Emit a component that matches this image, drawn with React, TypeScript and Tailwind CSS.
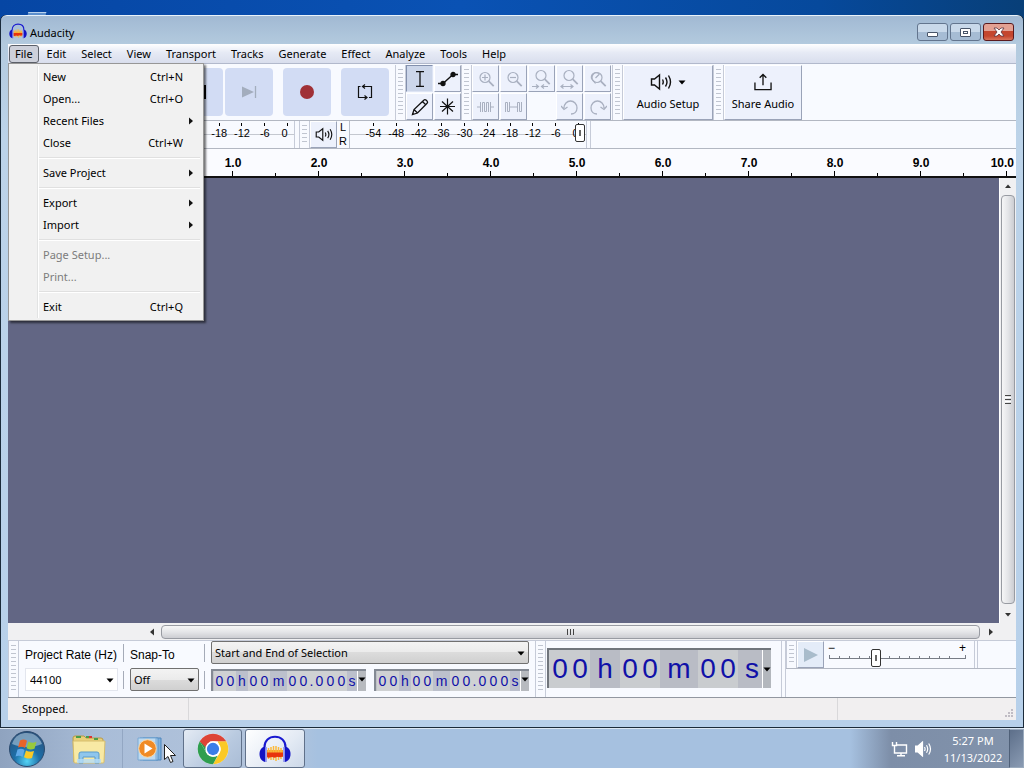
import React from "react";
import type { ReactNode } from "react";

const UI_FONT = "font-['Noto_Sans','Open_Sans',sans-serif]";
const ARIAL = "font-['Liberation_Sans',Arial,sans-serif]";

type MenuEntry = { label: string; shortcut?: string; submenu?: boolean; disabled?: boolean };

const fileMenu: MenuEntry[][] = [
  [
    { label: "New", shortcut: "Ctrl+N" },
    { label: "Open...", shortcut: "Ctrl+O" },
    { label: "Recent Files", submenu: true },
    { label: "Close", shortcut: "Ctrl+W" },
  ],
  [{ label: "Save Project", submenu: true }],
  [
    { label: "Export", submenu: true },
    { label: "Import", submenu: true },
  ],
  [
    { label: "Page Setup...", disabled: true },
    { label: "Print...", disabled: true },
  ],
  [{ label: "Exit", shortcut: "Ctrl+Q" }],
];

const menus = ["Edit", "Select", "View", "Transport", "Tracks", "Generate", "Effect", "Analyze", "Tools", "Help"];

function AudacityLogo({ className }: { className: string }) {
  return (
    <svg viewBox="0 0 32 28" className={className} aria-hidden="true">
      <path d="M5.500 14V12C5.500 5.500 10 1.800 16 1.800S26.500 5.500 26.500 12v2" fill="none" stroke="#1a1ad0" strokeWidth="2" />
      <path d="M8 15h16v7H8z" fill="#f9a02a" />
      <path d="M9.500 13v11M12 12v13M14.500 11v14M17 11v15M19.500 12v13M22 13v11" stroke="#fbb93a" strokeWidth="1.500" />
      <path d="M8 17.500h16v4l-3 .8-3-.6-2 1-3-.8-3 .8-2-.4z" fill="#e8340c" />
      <path d="M6.500 11.500C2.500 12 0.500 15 0.500 19s2 7.500 6 8z" fill="#1313c4" />
      <path d="M25.500 11.500c4 .5 6 3.500 6 7.500s-2 7.500-6 8z" fill="#1313c4" />
      <path d="M7 12v15M25 12v15" stroke="#8d93ee" strokeWidth="1.600" />
    </svg>
  );
}

function SpeakerIcon({ className }: { className: string }) {
  return (
    <svg viewBox="0 0 22 18" className={className} fill="none" stroke="#111" strokeWidth="1.400" aria-hidden="true">
      <path d="M1.500 6v6h3l5 4V2l-5 4z" />
      <path d="M12.500 6.500q1.500 2.500 0 5M15.500 4.500q3 4.500 0 9M18.500 2.500q4 6.500 0 13" />
    </svg>
  );
}

function Caret({ className = "" }: { className?: string }) {
  return (
    <svg viewBox="0 0 8 5" className={`h-[5px] w-2 ${className}`} aria-hidden="true">
      <path d="M0.500 0.500h7L4 4.500z" fill="#000" />
    </svg>
  );
}

function Grabber({ className = "" }: { className?: string }) {
  return (
    <div
      className={`w-[11px] shrink-0 self-stretch border-x border-[#c6cbd8] bg-[#f8faff] px-0.5 py-1 ${className}`}
    >
      <div className="h-full bg-[repeating-linear-gradient(#c0c5d0_0_1px,#f8faff_1px_4px)]" />
    </div>
  );
}

function TransportButton({ label, className = "", children }: { label: string; className?: string; children: ReactNode }) {
  return (
    <button
      type="button"
      aria-label={label}
      className={`flex size-12 shrink-0 items-center justify-center rounded bg-[#d2dcf4] ${className}`}
    >
      {children}
    </button>
  );
}

function ToolButton({ label, active, children }: { label: string; active?: boolean; children: ReactNode }) {
  return (
    <button
      type="button"
      aria-label={label}
      className={`flex size-[27px] items-center justify-center border ${
        active
          ? "border-[#8390ad] border-r-[#dde4f4] border-b-[#dde4f4] bg-[#ccd6ea]"
          : "border-white border-r-[#9aa3b8] border-b-[#9aa3b8] bg-[#edf1fc]"
      }`}
    >
      {children}
    </button>
  );
}

const zoomGlyphs: { label: string; detail: ReactNode }[] = [
  { label: "Zoom In", detail: <path d="M7 9.500h6M10 6.500v6" /> },
  { label: "Zoom Out", detail: <path d="M7 9.500h6" /> },
  { label: "Fit Selection", detail: <path d="M1 18.500h6M5 16.500l2.500 2L5 20.500M17 18.500h-6M13 16.500l-2.500 2 2.500 2" /> },
  { label: "Fit Project", detail: <path d="M2 18.500h12M4.500 16.500l-2.500 2 2.500 2M11.500 16.500l2.500 2-2.500 2" /> },
  { label: "Zoom Toggle", detail: <path d="M12 5.500C8 3 3.500 6 4.500 10.500l4 5M8.500 10l4-4" /> },
];

function ZoomIcon({ detail, raised }: { detail: ReactNode; raised: boolean }) {
  return (
    <svg viewBox="0 0 22 22" className="size-[22px]" fill="none" stroke="#a9b0c0" strokeWidth="1.200" aria-hidden="true">
      <g transform={raised ? "translate(1 -1)" : "translate(1 1)"}>
        <circle cx="9" cy="8.500" r="5" />
        <path d="M12.700 12.200l5 5" strokeWidth="1.800" />
      </g>
      {detail}
    </svg>
  );
}

const levels = ["-54", "-48", "-42", "-36", "-30", "-24", "-18", "-12", "-6", "0"];

function Meter({ name, width, from = 0, children }: { name: string; width: string; from?: number; children: ReactNode }) {
  return (
    <div className={`flex shrink-0 items-stretch overflow-hidden border-r border-[#c6cbd8] ${width}`}>
      <Grabber />
      <button
        type="button"
        aria-label={name}
        className="flex w-[27px] shrink-0 items-center justify-center border border-white border-r-[#9aa3b8] border-b-[#9aa3b8] bg-[#edf1fc]"
      >
        {children}
      </button>
      <div className={`flex w-3 shrink-0 flex-col items-center justify-between text-[11px] leading-[13px] ${ARIAL}`}>
        {from === 0 && (
          <>
            <span>L</span>
            <span>R</span>
          </>
        )}
      </div>
      <div className="flex w-[241px] shrink-0 border-l border-[#b9bfcb] bg-[linear-gradient(#c4c8d0,#c4c8d0)] bg-[length:100%_1px] bg-center bg-no-repeat pl-3">
        {levels.map((l, i) => (
          <div key={l} className={`flex flex-1 flex-col items-center text-[11px] leading-[15px] ${ARIAL}`}>
            <div className="mt-0.5 h-[3px] w-px bg-black" />
            {i >= from && <span className={l === "0" ? "pr-1.5" : ""}>{l}</span>}
          </div>
        ))}
      </div>
    </div>
  );
}

const timeParts = ["00", "h", "00", "m", "00", ".", "000", "s"];

function TimeField({ label }: { label: string }) {
  const widths: Record<string, string> = { h: "w-3", m: "w-[17px]", ".": "w-[5px]", s: "w-2.5" };
  return (
    <div
      role="group"
      aria-label={label}
      className={`flex h-[22px] items-stretch border-t-2 border-l-2 border-[#848a94] bg-[#bfc1c6] pl-px text-sm leading-5 text-[#1010a8] ${ARIAL}`}
    >
      {timeParts.map((p, i) =>
        /\d/.test(p) ? (
          <span key={i} className="flex bg-[#cfd1d3]">
            {p.split("").map((d, j) => (
              <span key={j} className="w-[11px] text-center">
                {d}
              </span>
            ))}
          </span>
        ) : (
          <span key={i} className={`flex justify-center ${p === "." ? "bg-[#cfd1d3]" : "bg-[#bcc0cc]"} ${widths[p]}`}>
            {p}
          </span>
        )
      )}
      <button type="button" aria-label={`${label} format`} className="flex w-[9px] justify-center border-l border-white bg-[#b7babf] pt-1.5">
        <Caret />
      </button>
    </div>
  );
}

function BigTime() {
  const widths: Record<string, string> = { h: "w-[30px]", m: "w-[38px]", s: "w-[24px] pl-1" };
  return (
    <div
      role="group"
      aria-label="Audio position"
      className={`flex h-10 items-stretch border-t-2 border-l-2 border-[#70757c] bg-[#c9cccf] pl-px text-[28px] leading-[38px] text-[#1010a8] ${ARIAL}`}
    >
      {["00", "h", "00", "m", "00", "s"].map((p, i) =>
        p === "00" ? (
          <span key={i} className="flex">
            <span className="w-5 text-center">0</span>
            <span className="w-5 text-center">0</span>
          </span>
        ) : (
          <span key={i} className={`flex justify-center bg-[#b9bcc5] ${widths[p]}`}>
            {p}
          </span>
        )
      )}
      <button type="button" aria-label="Audio position format" className="flex w-[9px] items-center justify-center border-l border-white bg-[#b3b7bd]">
        <Caret />
      </button>
    </div>
  );
}

function Dropdown({ id, options, className }: { id: string; options: string[]; className: string }) {
  return (
    <div className="relative">
      <select
        id={id}
        aria-label={id}
        className={`block h-[23px] w-full appearance-none pr-4 text-[11px] leading-4 text-black ${className}`}
      >
        {options.map((o) => (
          <option key={o}>{o}</option>
        ))}
      </select>
      <Caret className="pointer-events-none absolute top-[10px] right-1" />
    </div>
  );
}

function TitleBar() {
  const base = "flex h-[18px] w-[31px] items-center justify-center rounded-[3px] border";
  const grey = "border-[#63758e] bg-[linear-gradient(#c9d9ea_0_50%,#a6bcd4_50%_100%)]";
  return (
    <header className="-mx-[7px] -mt-px flex h-[29px] shrink-0 items-start pr-[9px] pl-2 text-xs">
      <AudacityLogo className="mt-2 h-4 w-[18px]" />
      <h1 className="mt-[10px] ml-[3px] flex-1 text-[11px] leading-4">Audacity</h1>
      <div className="mt-2 flex gap-0.5">
        <button type="button" aria-label="Minimize" className={`${base} ${grey}`}>
          <span className="mt-1 h-[5px] w-[11px] rounded-[1px] border border-[#485569] bg-white" />
        </button>
        <button type="button" aria-label="Maximize" className={`${base} ${grey}`}>
          <span className="flex h-[9px] w-[11px] items-center justify-center rounded-[1px] border border-[#485569] bg-white">
            <span className="h-[3px] w-[5px] border border-[#485569]" />
          </span>
        </button>
        <button
          type="button"
          aria-label="Close window"
          className={`${base} border-[#5b1a1d] bg-[linear-gradient(#e3a193_0_45%,#c4462e_45%_75%,#d9735a)]`}
        >
          <svg viewBox="0 0 12 10" className="h-[10px] w-3" aria-hidden="true">
            <path d="M1 1h3l2 2 2-2h3L8 5l3 4H8L6 7 4 9H1l3-4z" fill="#fff" stroke="#5a3540" strokeWidth="0.800" />
          </svg>
        </button>
      </div>
    </header>
  );
}

function FileMenu() {
  return (
    <div
      role="menu"
      className="absolute top-full left-0 z-20 w-[196px] border border-[#979797] bg-[#f1f1f1] py-0.5 text-[11px] shadow-[2px_2px_2px_rgba(0,0,0,0.55)]"
    >
      <div className="bg-[linear-gradient(90deg,transparent_28px,#e2e3e3_28px_29px,#fff_29px_30px,transparent_30px)]">
        {fileMenu.map((group, i) => (
          <div key={i}>
            {i > 0 && (
              <div className="flex h-2 items-center pr-[3px] pl-[30px]">
                <div className="h-0.5 w-full border-t border-[#e0e0e0] bg-white" />
              </div>
            )}
            {group.map((m) => (
              <button
                key={m.label}
                type="button"
                role="menuitem"
                disabled={m.disabled}
                className={`flex h-[22px] w-full items-center pr-[10px] pl-[34px] ${m.disabled ? "text-[#7c7c7c]" : "text-black"}`}
              >
                <span className="flex-1 text-left">{m.label}</span>
                {m.shortcut && <span className="pr-[10px]">{m.shortcut}</span>}
                {m.submenu && (
                  <svg viewBox="0 0 4 8" className="h-2 w-1" aria-hidden="true">
                    <path d="M0 0.500v7L4 4z" fill="#111" />
                  </svg>
                )}
              </button>
            ))}
          </div>
        ))}
      </div>
    </div>
  );
}

function MenuBar() {
  return (
    <nav className="flex h-5 shrink-0 border-b border-[#b2b9cc] bg-[linear-gradient(#fff,#e6eaf5_45%,#d9deed)] text-[11px] leading-4">
      <div className="relative pl-px">
        <button type="button" aria-expanded="true" className="mt-px h-[18px] rounded-[3px] border border-[#5c6069] bg-[#cdd0da] px-[5px]">
          File
        </button>
        <FileMenu />
      </div>
      {menus.map((m) => (
        <button key={m} type="button" className="pr-[7px] pl-2">
          {m}
        </button>
      ))}
    </nav>
  );
}

function Toolbars() {
  return (
    <div className="shrink-0 bg-[#f8faff]">
      <div className="flex h-[57px] items-stretch border-b border-[#b2b7c2] pt-px">
        <Grabber />
        <div className="flex items-center gap-0.5 pr-1.5 pb-0.5 pl-1.5">
          <TransportButton label="Pause">
            <svg viewBox="0 0 14 14" className="size-[14px]" aria-hidden="true">
              <path d="M2 1h3v12H2zM9 1h3v12H9z" />
            </svg>
          </TransportButton>
          <TransportButton label="Play">
            <svg viewBox="0 0 14 14" className="size-[14px]" aria-hidden="true">
              <path d="M1 0l12 7-12 7z" fill="#3a9a3a" />
            </svg>
          </TransportButton>
          <TransportButton label="Skip to Start">
            <svg viewBox="0 0 15 12" className="h-3 w-[15px]" aria-hidden="true">
              <path d="M14 0.500v11L3 6z" fill="#a3adbd" />
            </svg>
          </TransportButton>
          <TransportButton label="Stop">
            <span className="size-[14px] bg-black" />
          </TransportButton>
          <TransportButton label="Skip to End">
            <svg viewBox="0 0 15 12" className="h-3 w-[15px]" aria-hidden="true">
              <path d="M0 0.500v11L12 6z" fill="#a3adbd" />
              <path d="M13.500 0v12" stroke="#a3adbd" strokeWidth="1.300" />
            </svg>
          </TransportButton>
          <TransportButton label="Record" className="ml-2">
            <span className="size-[14px] rounded-full bg-[#a03036]" />
          </TransportButton>
          <TransportButton label="Loop" className="ml-2">
            <svg viewBox="0 0 18 18" className="size-[18px]" fill="none" stroke="#111" strokeWidth="1.200" aria-hidden="true">
              <path d="M4.500 3.500H2.500v11h8M8.500 12.500l2.500 2-2.500 2M13 14.500h2.500v-11H7M9 1.500l-2.500 2 2.500 2" />
            </svg>
          </TransportButton>
        </div>
        <Grabber />
        <div className="grid shrink-0 grid-cols-2 content-start gap-px">
          <ToolButton label="Selection Tool" active>
            <svg viewBox="0 0 12 18" className="h-[18px] w-3" fill="none" stroke="#111" strokeWidth="1.300" aria-hidden="true">
              <path d="M2 1.700h8M2 16.300h8M6 1.700v14.600" />
            </svg>
          </ToolButton>
          <ToolButton label="Envelope Tool">
            <svg viewBox="0 0 20 16" className="h-4 w-5" stroke="#111" strokeWidth="1.300" aria-hidden="true">
              <path d="M0 12.500h5l10-9h5" fill="none" />
              <circle cx="5" cy="12.500" r="2" fill="#111" />
              <circle cx="15" cy="3.500" r="2" fill="#111" />
            </svg>
          </ToolButton>
          <ToolButton label="Draw Tool">
            <svg viewBox="0 0 18 18" className="size-[18px]" fill="none" stroke="#111" strokeWidth="1.300" aria-hidden="true">
              <path d="M1.500 16.500l1.500-5L13 2q1-1 2.300.3l.8.8q1 1.200 0 2.200L6.500 15zM11.500 3.500l3.200 3.200M3 11.500L6.500 15" />
            </svg>
          </ToolButton>
          <ToolButton label="Multi-Tool">
            <svg viewBox="0 0 17 17" className="size-[17px]" stroke="#111" strokeWidth="1.200" aria-hidden="true">
              <path d="M8.500 0.500v16M1 8.500h15M3 3.500l11 10M14 3.500l-11 10" />
            </svg>
          </ToolButton>
        </div>
        <Grabber />
        <div className="grid shrink-0 grid-cols-5 content-start gap-px">
          {zoomGlyphs.map((z, i) => (
            <ToolButton key={z.label} label={z.label}>
              <ZoomIcon detail={z.detail} raised={i === 2 || i === 3} />
            </ToolButton>
          ))}
          <ToolButton label="Trim">
            <svg viewBox="0 0 17 12" className="h-3 w-[17px]" fill="none" stroke="#a9b0c0" aria-hidden="true">
              <path d="M0 6h3.500M13.500 6H17M3.500 1v10M5.500 11V1.500h2v9h2v-9h2V11M13.500 1v10" strokeWidth="1" />
            </svg>
          </ToolButton>
          <ToolButton label="Silence">
            <svg viewBox="0 0 17 12" className="h-3 w-[17px]" fill="none" stroke="#a9b0c0" aria-hidden="true">
              <path d="M0.500 11V1.500h2v9h2V1M4.500 6h8M12.500 11V1.500h2v9h2V1" strokeWidth="1" />
            </svg>
          </ToolButton>
          <span />
          <ToolButton label="Undo">
            <svg viewBox="0 0 18 16" className="h-4 w-[18px]" fill="none" stroke="#a9b0c0" strokeWidth="1.300" aria-hidden="true">
              <path d="M10 15c3 0 6-2 6-6s-3-7-6.500-7S3 5 3 9M0 7l3 3.500L6.500 8" />
            </svg>
          </ToolButton>
          <ToolButton label="Redo">
            <svg viewBox="0 0 18 16" className="h-4 w-[18px]" fill="none" stroke="#a9b0c0" strokeWidth="1.300" aria-hidden="true">
              <path d="M8 15c-3 0-6-2-6-6s3-7 6.500-7S15 5 15 9M18 7l-3 3.500L11.500 8" />
            </svg>
          </ToolButton>
        </div>
        <Grabber className="ml-px" />
        <button
          type="button"
          className="flex w-[90px] shrink-0 flex-col items-center border border-white border-r-[#9aa3b8] border-b-[#9aa3b8] bg-[#edf1fc] pt-[7px] text-[11px]"
        >
          <span className="flex items-center gap-1.5">
            <SpeakerIcon className="h-[18px] w-[22px]" />
            <Caret />
          </span>
          <span className="mt-[5px] leading-4">Audio Setup</span>
        </button>
        <Grabber />
        <button
          type="button"
          className="flex w-[78px] shrink-0 flex-col items-center border border-white border-r-[#9aa3b8] border-b-[#9aa3b8] bg-[#edf1fc] pt-[7px] text-[11px]"
        >
          <svg viewBox="0 0 20 19" className="h-[18px] w-5" fill="none" stroke="#111" strokeWidth="1.400" aria-hidden="true">
            <path d="M1.500 10v7.500h17V10M10 13V1.500M6.500 5L10 1.500 13.500 5" />
          </svg>
          <span className="mt-[5px] leading-4 whitespace-nowrap">Share Audio</span>
        </button>
      </div>
      <div className="flex h-7 items-stretch border-b border-[#b2b7c2]">
        <Meter name="Record Meter" width="mr-1 w-[287px]" from={6}>
          <svg viewBox="0 0 12 18" className="h-[18px] w-3" fill="none" stroke="#111" strokeWidth="1.300" aria-hidden="true">
            <path d="M4 1h4v9H4zM1 8c0 7 10 7 10 0M6 13v4" />
          </svg>
        </Meter>
        <div className="relative flex border-r border-[#c6cbd8] pr-[3px]">
          <Meter name="Playback Meter" width="w-[288px]">
            <SpeakerIcon className="h-[15px] w-[18px]" />
          </Meter>
          <input
            type="range"
            aria-label="Playback volume"
            defaultValue={100}
            className="absolute top-[3px] right-[5px] h-[18px] w-[230px] appearance-none bg-transparent [&::-webkit-slider-thumb]:h-[18px] [&::-webkit-slider-thumb]:w-[10px] [&::-webkit-slider-thumb]:appearance-none [&::-webkit-slider-thumb]:rounded-[2px] [&::-webkit-slider-thumb]:border [&::-webkit-slider-thumb]:border-[#333] [&::-webkit-slider-thumb]:bg-[linear-gradient(#666,#666)] [&::-webkit-slider-thumb]:bg-[length:2px_6px] [&::-webkit-slider-thumb]:bg-center [&::-webkit-slider-thumb]:bg-no-repeat [&::-webkit-slider-thumb]:bg-white"
          />
        </div>
      </div>
    </div>
  );
}

function Ruler() {
  return (
    <div className={`flex h-[29px] shrink-0 overflow-hidden border-b-2 border-[#111] bg-[#fafbff] pl-[182px] text-xs font-bold ${ARIAL}`}>
      {[1, 2, 3, 4, 5, 6, 7, 8, 9].map((n) => (
        <div key={n} className="flex w-[86px] shrink-0 flex-col items-end">
          <span className="flex h-[22px] w-full items-center justify-center pt-1.5">{n}.0</span>
          <div className="flex h-[5px] w-full items-end">
            <span className="ml-[42px] h-[5px] w-px bg-black" />
            <span className="ml-[42px] h-[3px] w-px bg-black" />
          </div>
        </div>
      ))}
      <div className="flex flex-1 flex-col">
        <span className="flex h-[22px] items-center justify-end pt-1.5 pr-0.5">10.0</span>
        <span className="ml-[42px] h-[5px] w-px bg-black" />
      </div>
    </div>
  );
}

function Arrow({ d, className }: { d: string; className: string }) {
  return (
    <svg viewBox="0 0 8 8" className={`size-2 ${className}`} aria-hidden="true">
      <path d={d} fill="#333" />
    </svg>
  );
}

function TrackArea() {
  return (
    <>
      <main className="flex min-h-0 flex-1">
        <div className="flex-1 bg-[#626684]" />
        <div className="flex w-[17px] flex-col items-center border-l border-white bg-[#f0f0f2]">
          <Arrow d="M1 6l3-3.500L7 6z" className="my-1" />
          <div className="mt-px flex w-[14px] flex-1 flex-col items-center justify-center gap-px rounded-sm border border-[#989ba2] bg-[linear-gradient(90deg,#f6f6f7,#e4e5e8_50%,#cccdd2)]">
            <i className="h-px w-1.5 bg-[#444]" />
            <i className="h-px w-1.5 bg-white" />
            <i className="h-px w-1.5 bg-[#444]" />
            <i className="h-px w-1.5 bg-white" />
            <i className="h-px w-1.5 bg-[#444]" />
          </div>
          <Arrow d="M1 2l3 3.500L7 2z" className="mt-[7px] mb-1" />
        </div>
      </main>
      <div className="flex h-[17px] shrink-0 items-center bg-[#f0f0f2] pr-[21px] pl-[140px]">
        <Arrow d="M6 0.500v7L2 4z" className="mr-[5px]" />
        <div className="flex h-[14px] flex-1 items-center justify-center gap-0.5 rounded-sm border border-[#989ba2] bg-[linear-gradient(#f6f6f7,#e4e5e8_50%,#cccdd2)]">
          <i className="h-1.5 w-px bg-[#444]" />
          <i className="h-1.5 w-px bg-[#444]" />
          <i className="h-1.5 w-px bg-[#444]" />
        </div>
        <Arrow d="M2 0.500v7L6 4z" className="ml-[7px]" />
      </div>
    </>
  );
}

function SelectionBar() {
  const raised =
    "rounded-[2px] border border-[#707070] bg-[linear-gradient(#f3f3f3,#ebebeb_50%,#dcdcdc_50%,#d0d0d0)] pl-[3px]";
  return (
    <div className="flex h-[58px] shrink-0 items-stretch border-y border-t-[#c6cbd8] border-b-[#9297a0] bg-[#f8faff]">
      <Grabber className="mr-1.5" />
      <div className="grid shrink-0 grid-cols-[93px_auto_69px_auto_auto] content-start items-center gap-x-[5px] gap-y-1">
        <label htmlFor="Project Rate" className={`flex h-[23px] items-center pt-1 text-xs whitespace-nowrap ${ARIAL}`}>
          Project Rate (Hz)
        </label>
        <span className="mr-px h-[18px] w-px bg-[#a5abb8]" />
        <label htmlFor="Snap-To" className={`flex h-[23px] items-center pt-1 text-xs ${ARIAL}`}>
          Snap-To
        </label>
        <span className="mr-px h-[18px] w-px bg-[#a5abb8]" />
        <Dropdown id="Selection Format" options={["Start and End of Selection"]} className={raised} />
        <Dropdown id="Project Rate" options={["44100"]} className="border border-[#e3e6ee] bg-white pl-1" />
        <span className="mr-px h-[18px] w-px bg-[#a5abb8]" />
        <Dropdown id="Snap-To" options={["Off"]} className={raised} />
        <span className="mr-px h-[18px] w-px bg-[#a5abb8]" />
        <div className="flex gap-2">
          <TimeField label="Selection start" />
          <TimeField label="Selection end" />
        </div>
      </div>
      <Grabber className="mr-px ml-[6px]" />
      <div className="flex shrink-0 items-start border-r border-[#c6cbd8] pt-[7px] pr-[10px]">
        <BigTime />
      </div>
      <div className="ml-[3px] min-w-0 flex-1 border-l border-[#c6cbd8]">
        <div className="flex h-7 items-stretch border-b border-[#b2b7c2]">
          <Grabber />
          <button
            type="button"
            aria-label="Play at speed"
            className="flex w-[27px] shrink-0 items-center justify-center border border-white border-r-[#9aa3b8] border-b-[#9aa3b8] bg-[#e4ecf8]"
          >
            <svg viewBox="0 0 14 14" className="size-[14px]" aria-hidden="true">
              <path d="M0 0l14 7-14 7z" fill="#a9bccb" />
            </svg>
          </button>
          <div className={`relative mr-1.5 ml-1 w-[140px] shrink-0 text-xs leading-[14px] ${ARIAL}`}>
            <div className="flex justify-between pr-0.5">
              <span>−</span>
              <span>+</span>
            </div>
            <svg viewBox="0 0 140 7" preserveAspectRatio="none" className="h-[7px] w-full" aria-hidden="true">
              <path
                d="M1.500 0v3M11.500 1v2M21.500 1v2M31.500 1v2M41.500 1v2M51.500 1v2M61.500 1v2M71.500 1v2M81.500 1v2M91.500 1v2M101.500 1v2M111.500 1v2M121.500 1v2M137.500 0v3M1 3.500h137"
                stroke="#777c86"
                fill="none"
              />
            </svg>
            <input
              type="range"
              aria-label="Playback speed"
              defaultValue={33}
              className="absolute inset-x-0 top-2 h-[18px] w-full appearance-none bg-transparent [&::-webkit-slider-thumb]:h-[18px] [&::-webkit-slider-thumb]:w-[10px] [&::-webkit-slider-thumb]:appearance-none [&::-webkit-slider-thumb]:rounded-[2px] [&::-webkit-slider-thumb]:border [&::-webkit-slider-thumb]:border-[#333] [&::-webkit-slider-thumb]:bg-[linear-gradient(#666,#666)] [&::-webkit-slider-thumb]:bg-[length:2px_6px] [&::-webkit-slider-thumb]:bg-center [&::-webkit-slider-thumb]:bg-no-repeat [&::-webkit-slider-thumb]:bg-white"
            />
          </div>
          <div className="w-1 border-x border-[#c6cbd8]" />
        </div>
      </div>
    </div>
  );
}

function Taskbar() {
  return (
    <footer className="flex h-10 shrink-0 items-stretch border-t border-[#dbe7f3] bg-[linear-gradient(90deg,#8fa3bf,#a9bdd8_10%,#b4c5dc_28%,#a6c1e0_31%,#a6c1e0_83%,#7d8ea8_87%,#8293ab)] pl-2">
      <button type="button" aria-label="Start" className="w-[38px]">
        <svg viewBox="0 0 38 38" className="size-[38px]">
          <defs>
            <radialGradient id="orb" cx="50%" cy="85%" r="80%">
              <stop offset="0" stopColor="#53d3f5" />
              <stop offset="0.45" stopColor="#1d6fa8" />
              <stop offset="1" stopColor="#29537f" />
            </radialGradient>
          </defs>
          <circle cx="19" cy="19" r="17.500" fill="url(#orb)" stroke="#2b4a6e" />
          <path d="M4 14C7 5 13 3 19 3s12 3 15 11c-9 4-21 4-30 0z" fill="#b9d3e6" opacity="0.550" />
          <path d="M12 10.500c3-1.500 5-1 7 .3l-2 7.200c-2-1.500-4.500-1.700-7-.5z" fill="#e8632a" />
          <path d="M20.500 11.500c3 1.500 5 1.500 8 .3l-2 7c-3 1.200-5 .8-8-.6z" fill="#98c93c" />
          <path d="M9.500 19.500c3-1.200 5-.8 7 .5l-2 7c-2-1.400-4.500-1.600-7-.4z" fill="#5fa8e8" />
          <path d="M18 20.500c3 1.500 5 1.500 8 .4l-2 7c-3 1.200-5 .8-8-.6z" fill="#fbc926" />
        </svg>
      </button>
      <button type="button" aria-label="File Explorer" className="ml-[17px] flex w-[52px] items-center justify-center">
        <svg viewBox="0 0 34 30" className="h-[30px] w-[34px]">
          <path d="M1 4q0-2 2-2h9l2 2h15q2 0 2 2v22H2z" fill="#e8cf7a" stroke="#b99a45" />
          <path d="M4 3h5M14 3h4M22 5h4" stroke="#4a9e4a" strokeWidth="2" />
          <path d="M17 3h3" stroke="#d33" strokeWidth="2" />
          <path d="M1 7h32l-1 21q0 1-1 1H3q-1 0-1-1z" fill="#f8e9a4" stroke="#d6bd6c" />
          <path d="M7 29V20q0-2 2-2h16q2 0 2 2v9h-4v-6H11v6z" fill="#8fc6ec" stroke="#5b9bcb" />
          <path d="M5 25h24v4H5z" fill="#b5dcf5" opacity="0.800" />
        </svg>
      </button>
      <button
        type="button"
        aria-label="Media Player"
        className="relative ml-[7px] flex w-[57px] items-center justify-start border-l border-[#93a7c3] pl-[14px]"
      >
        <svg viewBox="0 0 27 26" className="h-[26px] w-[27px]">
          <path d="M6 2h18v22H6z" fill="#7fb0dc" stroke="#4e86bd" />
          <path d="M3 2h18v22H3z" fill="#a8cdec" stroke="#5b94c8" />
          <path d="M1 2h18v22H1z" fill="#bddaf1" stroke="#7aa9d4" />
          <circle cx="10.500" cy="12.500" r="8.800" fill="#f08a24" stroke="#fbd9a8" />
          <path d="M7.500 7.500l8 5-8 5z" fill="#fff" />
        </svg>
        <svg viewBox="0 0 12 19" className="absolute top-[15px] left-[41px] h-[19px] w-3" aria-hidden="true">
          <path d="M0.500 0.500v15l3.500-3 2.500 6 2.500-1-2.500-6h5z" fill="#fff" stroke="#222" />
        </svg>
      </button>
      <button
        type="button"
        aria-label="Google Chrome"
        className="ml-1 flex w-[59px] items-center justify-center rounded-[3px] border border-[#60718a] bg-[linear-gradient(135deg,#e4ebf4,#b9cae0_60%,#aabdd6)]"
      >
        <svg viewBox="0 0 48 48" className="size-8">
          <circle cx="24" cy="24" r="23" fill="#fff" />
          <path d="M43.900 12.500A23 23 0 0 1 24 47l10-17.200a11.500 11.500 0 0 0-1-12.300l-2-5z" fill="#fbc926" />
          <path d="M24 47A23 23 0 0 1 4.100 12.500L14 29.800a11.500 11.500 0 0 0 10 5.700q3.500 0 7-1.500z" fill="#2f9e4f" />
          <path d="M4.100 12.500A23 23 0 0 1 43.900 12.500H24A11.500 11.500 0 0 0 13 21z" fill="#dd4436" />
          <path d="M4.100 12.500L14 29.800V18z" fill="#2f9e4f" />
          <path d="M4.100 12.500L13.500 22l6-8z" fill="#dd4436" />
          <circle cx="24" cy="24" r="11.500" fill="#fff" />
          <circle cx="24" cy="24" r="9.200" fill="#3b7de8" />
        </svg>
      </button>
      <button
        type="button"
        aria-label="Audacity"
        className="ml-[3px] flex w-[60px] items-center justify-center rounded-[3px] border border-[#60718a] bg-[linear-gradient(135deg,#fff,#e3eaf4_60%,#ccd8e8)]"
      >
        <AudacityLogo className="h-7 w-8" />
      </button>
      <div className="ml-auto flex items-center text-white">
        <svg viewBox="0 0 17 16" className="h-4 w-[17px]" fill="none" stroke="#fff" strokeWidth="1.400" aria-hidden="true">
          <path d="M6 4h9.500v8H5M10 12v2.500M6 14.800h8" />
          <path d="M1.500 1v3.500h4V1M3.500 4.500V12H5" />
        </svg>
        <svg viewBox="0 0 17 16" className="ml-[7px] h-4 w-[17px]" fill="none" stroke="#fff" strokeWidth="1.200" aria-hidden="true">
          <path d="M0.500 5v6h2.500l4.500 4V1L3 5z" fill="#fff" />
          <path d="M9.500 6q1.200 2 0 4M11.500 4.200q2.400 3.800 0 7.600M13.700 2.500q3.600 5.500 0 11" />
        </svg>
        <div className="mr-1 ml-[9px] w-16 text-center text-[11px] leading-[17px]">
          <div>5:27 PM</div>
          <div>11/13/2022</div>
        </div>
      </div>
      <button
        type="button"
        aria-label="Show desktop"
        className="w-[15px] border border-[#9aaabd] border-l-[#4f6078] bg-[linear-gradient(135deg,#5d6f8a,#8a9bb3)]"
      />
    </footer>
  );
}

export default function App() {
  return (
    <div className={`flex h-screen flex-col overflow-hidden bg-[linear-gradient(90deg,#0646a4,#0a52b4_45%,#06499c_80%,#083f78)] text-black ${UI_FONT}`}>
      <div className="h-[15px] shrink-0 pt-3 pl-7">
        <div className="h-[3px] w-[18px] -skew-x-12 border-t border-[#b9d2ee] bg-[#5d8fcc]" />
      </div>
      <div className="flex min-h-0 flex-1 flex-col rounded-t-md bg-[#1b2b3a] px-px pb-px">
        <div className="flex min-h-0 flex-1 flex-col rounded-t-md border-t border-[#e8f2fa] bg-[linear-gradient(#a1b9d3,#b3cade_28px,#bcd3e9_120px,#b7d0ea)] px-[7px] pb-[7px]">
          <TitleBar />
          <MenuBar />
          <Toolbars />
          <Ruler />
          <TrackArea />
          <SelectionBar />
          <div className="flex h-[22px] shrink-0 items-stretch bg-[#f1eff0] text-[11px] leading-[22px]">
            <span className="flex-1 pl-[14px]">
              <span className="block w-[167px] border-r border-[#d9d8da]">Stopped.</span>
            </span>
            <span className="flex w-[179px] items-end justify-end border-l border-[#d9d8da] p-0.5">
              <svg viewBox="0 0 9 9" className="size-[9px]" aria-hidden="true">
                <path d="M6 0h2v2H6zM6 3h2v2H6zM3 3h2v2H3zM6 6h2v2H6zM3 6h2v2H3zM0 6h2v2H0z" fill="#c0bcc4" />
              </svg>
            </span>
          </div>
        </div>
      </div>
      <Taskbar />
    </div>
  );
}
